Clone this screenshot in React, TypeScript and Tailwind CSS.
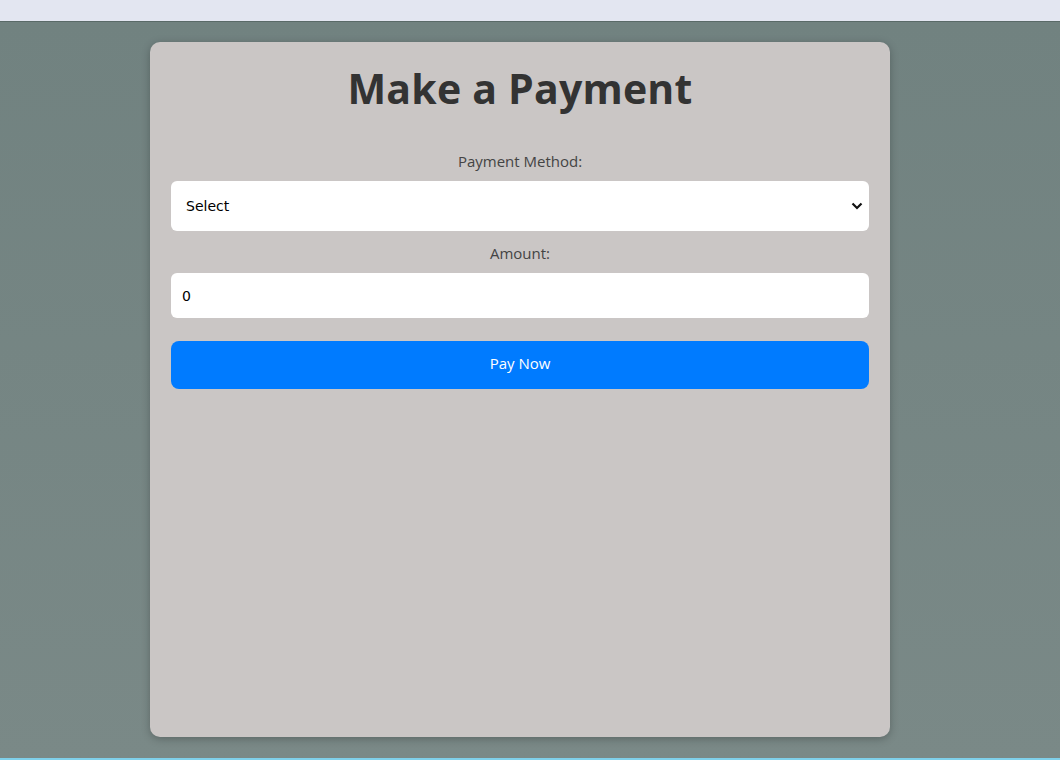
import { useState } from "react";

const PaymentForm = () => {
  const [method, setMethod] = useState("");
  const [amount, setAmount] = useState("0");

  return (
    <div className="flex flex-col bg-[#cac6c5] shadow-[0_2px_8px_rgba(0,0,0,0.25)] rounded-[10px] w-[740px] h-[695px] px-[21px] pt-[18px]">
      <h1 className="text-center font-['Open_Sans',sans-serif] font-bold text-[41px] leading-[56px] text-[#333333] tracking-[0.2px]">
        Make a Payment
      </h1>

      <label className="mt-[35px] text-center font-['Open_Sans',sans-serif] text-[15px] leading-[20px] text-[#444444]">
        Payment Method:
      </label>
      <div className="relative mt-[10px]">
        <select
          value={method}
          onChange={(e) => setMethod(e.target.value)}
          className="appearance-none w-full h-[50px] bg-white rounded-[6px] pl-[15px] pr-10 font-['DejaVu_Sans',sans-serif] text-[14px] text-black outline-none"
        >
          <option value="">Select</option>
          <option value="card">Credit Card</option>
          <option value="paypal">PayPal</option>
          <option value="bank">Bank Transfer</option>
        </select>
        <svg
          className="absolute right-[6px] top-1/2 -translate-y-1/2 pointer-events-none"
          width="12"
          height="8"
          viewBox="0 0 12 8"
        >
          <path d="M1.5 1.5 L6 6 L10.5 1.5" fill="none" stroke="#111" strokeWidth="2.2" />
        </svg>
      </div>

      <label className="mt-[12px] text-center font-['Open_Sans',sans-serif] text-[15px] leading-[20px] text-[#444444]">
        Amount:
      </label>
      <input
        type="text"
        value={amount}
        onChange={(e) => setAmount(e.target.value)}
        className="mt-[10px] w-full h-[45px] bg-white rounded-[6px] px-[11px] font-['DejaVu_Sans',sans-serif] text-[14px] text-black outline-none"
      />

      <button className="mt-[23px] w-full h-[48px] bg-[#007bff] rounded-[8px] pb-[3px] font-['Open_Sans',sans-serif] font-medium text-[15px] text-white">
        Pay Now
      </button>
    </div>
  );
};

export default function App() {
  return (
    <div className="flex flex-col w-full h-[760px] overflow-hidden">
      <div className="h-[22px] bg-[#e3e6f1] border-b border-[#5a6a68]" />
      <main className="flex flex-1 justify-center pt-[20px] pr-[20px] bg-gradient-to-b from-[#718280] to-[#7a8987]">
        <PaymentForm />
      </main>
      <div className="h-[2px] bg-[#7fd0ea]" />
    </div>
  );
}
